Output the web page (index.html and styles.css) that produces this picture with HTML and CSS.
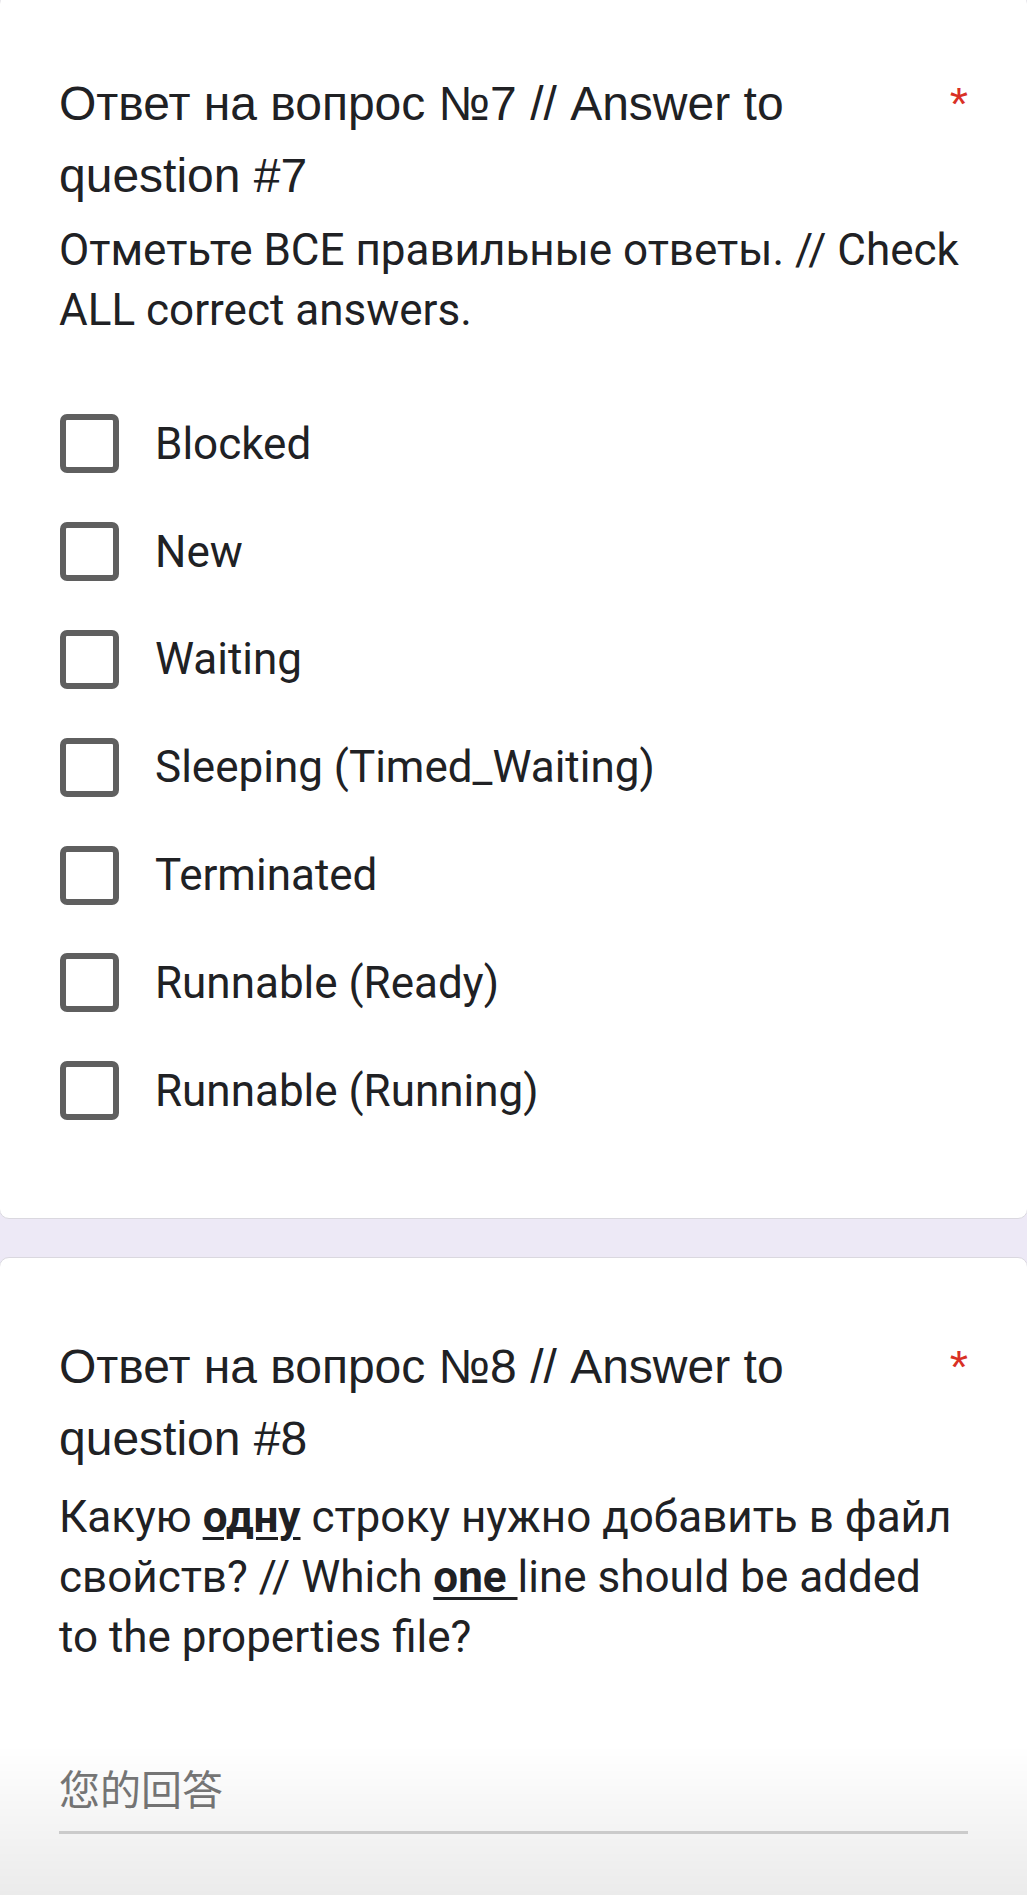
FILE: index.html
```html
<!DOCTYPE html>
<html lang="ru">
<head>
<meta charset="utf-8">
<title>Ответ на вопрос</title>
<link rel="stylesheet" href="styles.css">
</head>
<body>
<main class="form">
  <section class="card card-first">
    <div class="q-head">
      <div class="q-title">Ответ на вопрос №7 // Answer to question #7</div>
      <span class="req">*</span>
    </div>
    <div class="q-desc">Отметьте ВСЕ правильные ответы. // Check ALL correct answers.</div>
    <div class="options">
      <label class="opt"><span class="box"></span><span class="opt-text">Blocked</span></label>
      <label class="opt"><span class="box"></span><span class="opt-text">New</span></label>
      <label class="opt"><span class="box"></span><span class="opt-text">Waiting</span></label>
      <label class="opt"><span class="box"></span><span class="opt-text">Sleeping (Timed_Waiting)</span></label>
      <label class="opt"><span class="box"></span><span class="opt-text">Terminated</span></label>
      <label class="opt"><span class="box"></span><span class="opt-text">Runnable (Ready)</span></label>
      <label class="opt"><span class="box"></span><span class="opt-text">Runnable (Running)</span></label>
    </div>
  </section>
  <section class="card card-last">
    <div class="q-head">
      <div class="q-title">Ответ на вопрос №8 // Answer to question #8</div>
      <span class="req">*</span>
    </div>
    <div class="q-desc q-desc-2">Какую <b class="em">одну</b> строку нужно добавить в файл свойств? // Which <b class="em">one </b>line should be added to the properties file?</div>
    <div class="answer"><span class="placeholder">您的回答</span></div>
  </section>
</main>
<div class="bottom-fade"></div>
</body>
</html>
```
FILE: styles.css
```css
html, body {
  margin: 0;
  padding: 0;
}
body {
  background: #ede9f6;
  font-family: Roboto, "Noto Sans", sans-serif;
  color: #202124;
  width: 1027px;
  height: 1895px;
  overflow: hidden;
}
.form {
  display: flex;
  flex-direction: column;
  gap: 38px;
}
.card {
  background: #ffffff;
  border: 1px solid #dad8df;
  border-radius: 10px;
  padding: 73px 59px 73px 59px;
  margin: 0 -1px;
}
.card-first {
  margin-top: -6px;
}
.card-last {
  padding-bottom: 120px;
}
.q-head {
  display: flex;
  align-items: flex-start;
}
.q-title {
  flex: 1;
  font-family: "Liberation Sans", Arial, sans-serif;
  font-size: 48px;
  line-height: 72px;
  color: #202124;
}
.req {
  flex: none;
  font-family: "Liberation Sans", Arial, sans-serif;
  font-size: 47px;
  line-height: 72px;
  color: #d93025;
  padding-left: 12px;
}
.q-desc {
  margin-top: 8px;
  font-size: 44px;
  line-height: 60px;
  color: #202124;
}
.q-desc-2 {
  margin-top: 12px;
}
.em {
  font-weight: 700;
  text-decoration: underline;
  text-decoration-thickness: 3px;
  text-underline-offset: 5px;
}
.options {
  margin-top: 50px;
  display: flex;
  flex-direction: column;
}
.opt {
  display: flex;
  align-items: center;
  height: 107.8px;
}
.box {
  flex: none;
  width: 59px;
  height: 59px;
  box-sizing: border-box;
  border: 6px solid #5f5f5f;
  border-radius: 7px;
  margin-left: 1px;
}
.opt-text {
  margin-left: 36px;
  font-size: 44px;
  color: #202124;
}
.answer {
  margin-top: 90px;
  padding-bottom: 14px;
  border-bottom: 3px solid #d6d6d6;
}
.placeholder {
  display: block;
  font-family: "Noto Sans CJK SC", "Noto Sans", sans-serif;
  font-size: 41px;
  line-height: 60px;
  color: #777777;
}
.bottom-fade {
  position: fixed;
  left: 0;
  right: 0;
  bottom: 0;
  height: 150px;
  background: linear-gradient(to bottom, rgba(0, 0, 0, 0), rgba(0, 0, 0, 0.08));
  pointer-events: none;
}
```
